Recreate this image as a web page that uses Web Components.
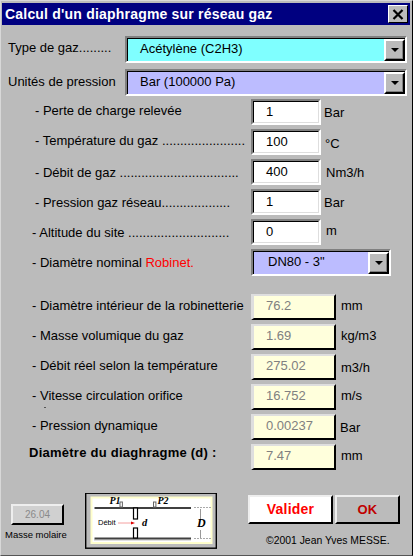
<!DOCTYPE html>
<html lang="fr"><head><meta charset="utf-8"><title>Calcul d'un diaphragme</title><style>
html,body{margin:0;padding:0;background:#bbb}
body{width:413px;height:556px;overflow:hidden;font:13px/16px "Liberation Sans",Arial,sans-serif;color:#000}
.red{color:#f00}
</style></head><body>
<win-dialog heading="Calcul d'un diaphragme sur réseau gaz">
  <combo-row label="Type de gaz........." tint="#7fffff">Acétylène (C2H3)</combo-row>
  <combo-row label="Unités de pression" tint="#bcbcff" style="--ly:1px">Bar (100000 Pa)</combo-row>
  <section-group style="--top:-3px">
    <form-row x="33" ly="4" uy="6" ux="3"><span slot="label">- Perte de charge relevée</span><text-field>1</text-field><span slot="unit">Bar</span></form-row>
    <form-row x="33" ly="4" uy="7" ux="4"><span slot="label">- Température du gaz .......................</span><text-field>100</text-field><span slot="unit">°C</span></form-row>
    <form-row x="33" ly="6" uy="6" ux="5"><span slot="label">- Débit de gaz .................................</span><text-field>400</text-field><span slot="unit">Nm3/h</span></form-row>
    <form-row x="33" ly="6" uy="6" ux="3"><span slot="label">- Pression gaz réseau...................</span><text-field>1</text-field><span slot="unit">Bar</span></form-row>
    <form-row x="30" ly="6" uy="4" ux="5"><span slot="label">- Altitude du site ............................</span><text-field>0</text-field><span slot="unit">m</span></form-row>
    <form-row x="30" ly="6"><span slot="label">- Diamètre nominal <span class="red">Robinet.</span></span><combo-box tint="#bcbcff" style="width:140px;--pad:14px">DN80 - 3"</combo-box></form-row>
  </section-group>
  <section-group style="--top:15px">
    <form-row x="30" ly="4" uy="4" ux="5"><span slot="label">- Diamètre intérieur de la robinetterie</span><text-field readonly>76.2</text-field><span slot="unit">mm</span></form-row>
    <form-row x="30" ly="4" uy="4" ux="5"><span slot="label">- Masse volumique du gaz</span><text-field readonly>1.69</text-field><span slot="unit">kg/m3</span></form-row>
    <form-row x="30" ly="4" uy="6" ux="5"><span slot="label">- Débit réel selon la température</span><text-field readonly>275.02</text-field><span slot="unit">m3/h</span></form-row>
    <form-row x="30" ly="4" uy="4" ux="5" speck><span slot="label">- Vitesse circulation orifice</span><text-field readonly>16.752</text-field><span slot="unit">m/s</span></form-row>
    <form-row x="30" ly="4" uy="6" ux="4"><span slot="label">- Pression dynamique</span><text-field readonly>0.00237</text-field><span slot="unit">Bar</span></form-row>
    <form-row x="27" ly="1" uy="4" ux="5"><b slot="label" style="letter-spacing:.25px">Diamètre du diaghragme (d) :</b><text-field readonly>7.47</text-field><span slot="unit">mm</span></form-row>
  </section-group>
  <footer-row>
    <molar-box slot="molar" value="26.04">Masse molaire</molar-box>
    <orifice-diagram slot="diagram"></orifice-diagram>
    <push-button slot="actions" style="width:85px;--bg:#fff;--fg:#f00;--fs:14px">Valider</push-button>
    <push-button slot="actions" style="width:65px;--bg:#bbb;--fg:#c00000;--fs:13px">OK</push-button>
    <span slot="note">©2001 Jean Yves MESSE.</span>
  </footer-row>
</win-dialog>
<script>
function def(name,html,init){
  customElements.define(name,class extends HTMLElement{
    constructor(){super();this.attachShadow({mode:'open'}).innerHTML=html;}
    connectedCallback(){if(init)init(this,this.shadowRoot);}
  });
}
def('win-dialog',`<style>
:host{display:block;width:413px;height:556px;box-sizing:border-box;background:#bbb;border-style:solid;border-width:1px;border-color:#d8d8d8 #000 #555 #d8d8d8}
.frame{height:100%;box-sizing:border-box;border-style:solid;border-width:2px 2px 1px 1px;border-color:#bbb}
.bar{height:22px;background:#000080;color:#fff;display:flex;align-items:center;justify-content:space-between;padding:0 2px 0 3px;font:bold 14px/22px "Liberation Sans",Arial,sans-serif;letter-spacing:.2px}
.x{width:20px;height:18px;box-sizing:border-box;background:#bbb;border:1px solid;border-color:#fff #000 #000 #fff;display:flex;align-items:center;justify-content:center}
.x svg{display:block}
.body{padding-top:11px;display:flex;flex-direction:column}
</style><div class="frame"><div class="bar"><span id="t"></span><div class="x"><svg width="12" height="11" viewBox="0 0 12 11"><path d="M1.5 1L10.5 10M10.5 1L1.5 10" stroke="#000" stroke-width="2.2" fill="none"/></svg></div></div><div class="body"><slot></slot></div></div>`,
(h,s)=>{s.getElementById('t').textContent=h.getAttribute('heading')});
def('section-group',`<style>:host{display:block;margin-top:var(--top,0)}</style><slot></slot>`);
def('combo-row',`<style>
:host{display:flex;height:26px;margin-bottom:7px;padding-left:6px}
.l{width:117px;padding-top:calc(4px + var(--ly,0px));white-space:nowrap}
combo-box{width:282px;--pad:12px}
</style><div class="l" id="l"></div><combo-box id="c"><slot></slot></combo-box>`,
(h,s)=>{s.getElementById('l').textContent=h.getAttribute('label');s.getElementById('c').setAttribute('tint',h.getAttribute('tint'));});
def('combo-box',`<style>
:host{display:block;box-sizing:border-box;height:27px;border:2px solid;border-color:#808080 #fff #fff #808080}
.in{height:100%;box-sizing:border-box;border:solid #000;border-width:1px 0 0 1px;display:flex;background:var(--tint)}
.v{flex:1;padding-left:var(--pad,12px);line-height:19px;white-space:nowrap;overflow:hidden}
.b{width:21px;box-sizing:border-box;background:#bbb;border:2px solid;border-color:#fff #000 #000 #fff;box-shadow:inset -1px -1px #808080;display:flex;align-items:center;justify-content:center}
i{display:block;width:0;height:0;border:4px solid transparent;border-top-color:#000;border-bottom:0}
</style><div class="in" id="i"><div class="v"><slot></slot></div><div class="b"><i></i></div></div>`,
(h,s)=>{s.getElementById('i').style.setProperty('--tint',h.getAttribute('tint'));});
def('form-row',`<style>
:host{display:flex;height:30px;align-items:flex-start;white-space:nowrap}
.l{box-sizing:border-box;width:249px;flex:none}
.u{flex:none}
.s{display:none;width:2px;height:1px;background:#555;margin:3px 0 0 12px}
:host([speck]) .s{display:block}
</style><div class="l" id="l"><slot name="label"></slot><div class="s"></div></div><slot></slot><div class="u" id="u"><slot name="unit"></slot></div>`,
(h,s)=>{const l=s.getElementById('l'),u=s.getElementById('u');
 l.style.paddingLeft=h.getAttribute('x')+'px';l.style.paddingTop=h.getAttribute('ly')+'px';
 u.style.paddingTop=(h.getAttribute('uy')||0)+'px';u.style.paddingLeft=(h.getAttribute('ux')||0)+'px';});
def('text-field',`<style>
:host{display:block;box-sizing:border-box;flex:none;width:70px;height:26px;border:2px solid;border-color:#808080 #fff #fff #808080;background:#fff;line-height:20px}
.in{height:100%;box-sizing:border-box;border:1px solid;border-color:#000 #dedede #dedede #000;padding-left:12px}
:host([readonly]){width:85px;border:0;background:#ffffdc;color:#808080}
:host([readonly]) .in{border-style:solid;border-width:2px 2px 2px 3px;border-color:#dedede #000 #000 #dedede;padding-left:12px;line-height:20px}
</style><div class="in"><slot></slot></div>`);
def('footer-row',`<style>
:host{display:flex;margin-top:19px;align-items:flex-start}
.m{width:83px;flex:none;padding-left:3px;box-sizing:border-box}
.d{width:163px;flex:none}
.r{flex:none;width:155px}
.a{display:flex;gap:2px;margin-top:2px}
.n{font-size:10.4px;line-height:14px;padding:10px 0 0 18px;white-space:nowrap}
</style><div class="m"><slot name="molar"></slot></div><div class="d"><slot name="diagram"></slot></div><div class="r"><div class="a"><slot name="actions"></slot></div><div class="n"><slot name="note"></slot></div></div>`);
def('molar-box',`<style>
:host{display:block;padding-top:11px}
.b{margin-left:6px;width:53px;height:21px;box-sizing:border-box;background:#d0d0d0;color:#8a8a8a;border:2px solid;border-color:#eee #000 #000 #eee;font-size:10px;line-height:17px;text-align:center}
.t{font-size:9.5px;line-height:14px;margin-top:3px;white-space:nowrap}
</style><div class="b" id="v"></div><div class="t"><slot></slot></div>`,
(h,s)=>{s.getElementById('v').textContent=h.getAttribute('value')});
def('push-button',`<style>
:host{display:block;flex:none;height:29px;box-sizing:border-box;background:var(--bg);color:var(--fg);border:2px solid;border-color:#eee #000 #000 #eee;text-align:center;font:bold var(--fs)/25px "Liberation Sans",Arial,sans-serif;letter-spacing:.2px}
</style><slot></slot>`);
def('orifice-diagram',`<style>
:host{display:block;width:132px;height:56px}
svg{display:block}
text{font-family:"Liberation Serif",serif;font-weight:bold;font-style:italic}
.s{font-family:"Liberation Sans",sans-serif;font-weight:normal;font-style:normal}
</style>
<svg width="132" height="56" viewBox="86 493 132 56">
<rect x="86.7" y="493.2" width="130.6" height="55" fill="#bbb" stroke="#000" stroke-width="1.4"/>
<rect x="92.5" y="497.5" width="120" height="45.5" fill="#fff" stroke="#ffffcc" stroke-width="2"/>
<g fill="none" stroke="#808080" stroke-width="1">
<path d="M195 507.5H212M195 538.5H212" stroke="#aaa" stroke-dasharray="2 1"/>
<path d="M201.5 509V519M201.5 530V538" stroke="#999"/>
</g>
<path d="M95.5 508H192" stroke="#404040" stroke-width="2"/>
<path d="M95.5 538.5H192" stroke="#404040" stroke-width="2"/>
<path d="M95.5 540H192" stroke="#808080" stroke-width="1" stroke-dasharray="1 1"/>
<rect x="121" y="502" width="2.4" height="5" fill="#fff" stroke="#666" stroke-width="1"/>
<rect x="154.5" y="502" width="2.4" height="5" fill="#fff" stroke="#666" stroke-width="1"/>
<rect x="134.5" y="508" width="4" height="11" fill="#fff" stroke="#000" stroke-width="1.2"/>
<rect x="134.5" y="528" width="4" height="10" fill="#fff" stroke="#000" stroke-width="1.2"/>
<text x="110.5" y="504" font-size="10">P1</text>
<text x="158.5" y="504" font-size="10">P2</text>
<text class="s" x="99" y="525" font-size="7.5">Débit</text>
<path d="M119 523H133" stroke="#f4a0a0" stroke-width="1"/>
<path d="M132 521.5L136 523L132 524.5Z" fill="#e00000"/>
<text x="143" y="526" font-size="10.5">d</text>
<text x="198" y="526.5" font-size="12">D</text>
</svg>`);
</script></body></html>
